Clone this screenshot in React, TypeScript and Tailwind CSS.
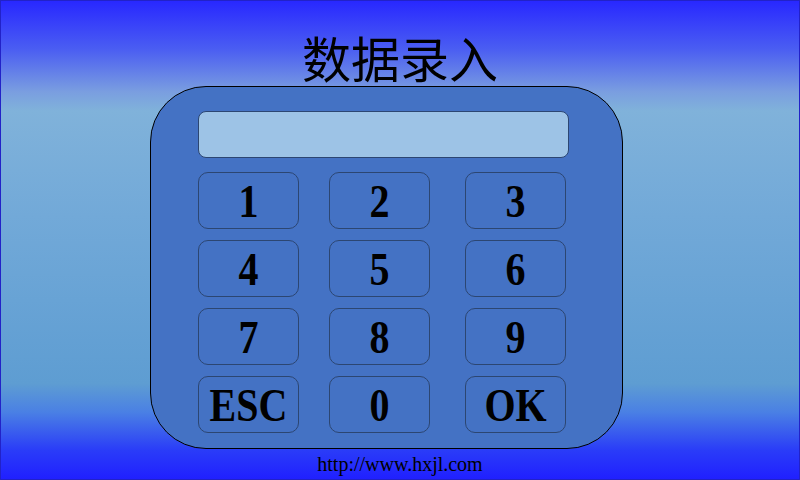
const keys = ["1", "2", "3", "4", "5", "6", "7", "8", "9", "ESC", "0", "OK"];

function Key({ label }: { label: string }) {
  return (
    <div className="flex h-[57px] w-[101px] items-center justify-center rounded-[10px] border border-[#2c4672] bg-[#4472c4]">
      <span
        className="inline-block translate-y-[1px] scale-y-[1.17] text-[40px] leading-none font-bold text-black"
        style={{ fontFamily: '"Liberation Serif", "Times New Roman", serif' }}
      >
        {label}
      </span>
    </div>
  );
}

export default function App() {
  return (
    <div className="flex h-[480px] w-[800px] flex-col items-center overflow-hidden border border-[#2222c8] bg-[linear-gradient(to_bottom,#2828ff_0%,#4a5df2_10%,#7a9ee0_19%,#80b2da_23%,#72a9d8_45%,#5e9dd2_80%,#4a80e4_86%,#2a3cf8_94%,#2020ff_100%)]">
      <h1
        className="mt-[26px] h-[59px] text-[49px] leading-[59px] font-normal text-black"
        style={{ fontFamily: '"Noto Sans CJK SC", "Noto Sans", sans-serif' }}
      >
        数据录入
      </h1>

      <div className="ml-[-27px] h-[363px] w-[473px] rounded-[56px] border-[1.5px] border-black bg-[#4472c4] pt-[24px] pl-[47px]">
        <div className="h-[47px] w-[371px] rounded-[8px] border border-[#2c4672] bg-[#9dc3e6]" />
        <div className="mt-[14px] grid grid-cols-[131px_136px_101px] gap-y-[11px]">
          {keys.map((k) => (
            <Key key={k} label={k} />
          ))}
        </div>
      </div>

      <div
        className="mt-[1px] text-[20px] leading-[28px] text-black"
        style={{ fontFamily: '"Liberation Serif", "Times New Roman", serif' }}
      >
        http://www.hxjl.com
      </div>
    </div>
  );
}
